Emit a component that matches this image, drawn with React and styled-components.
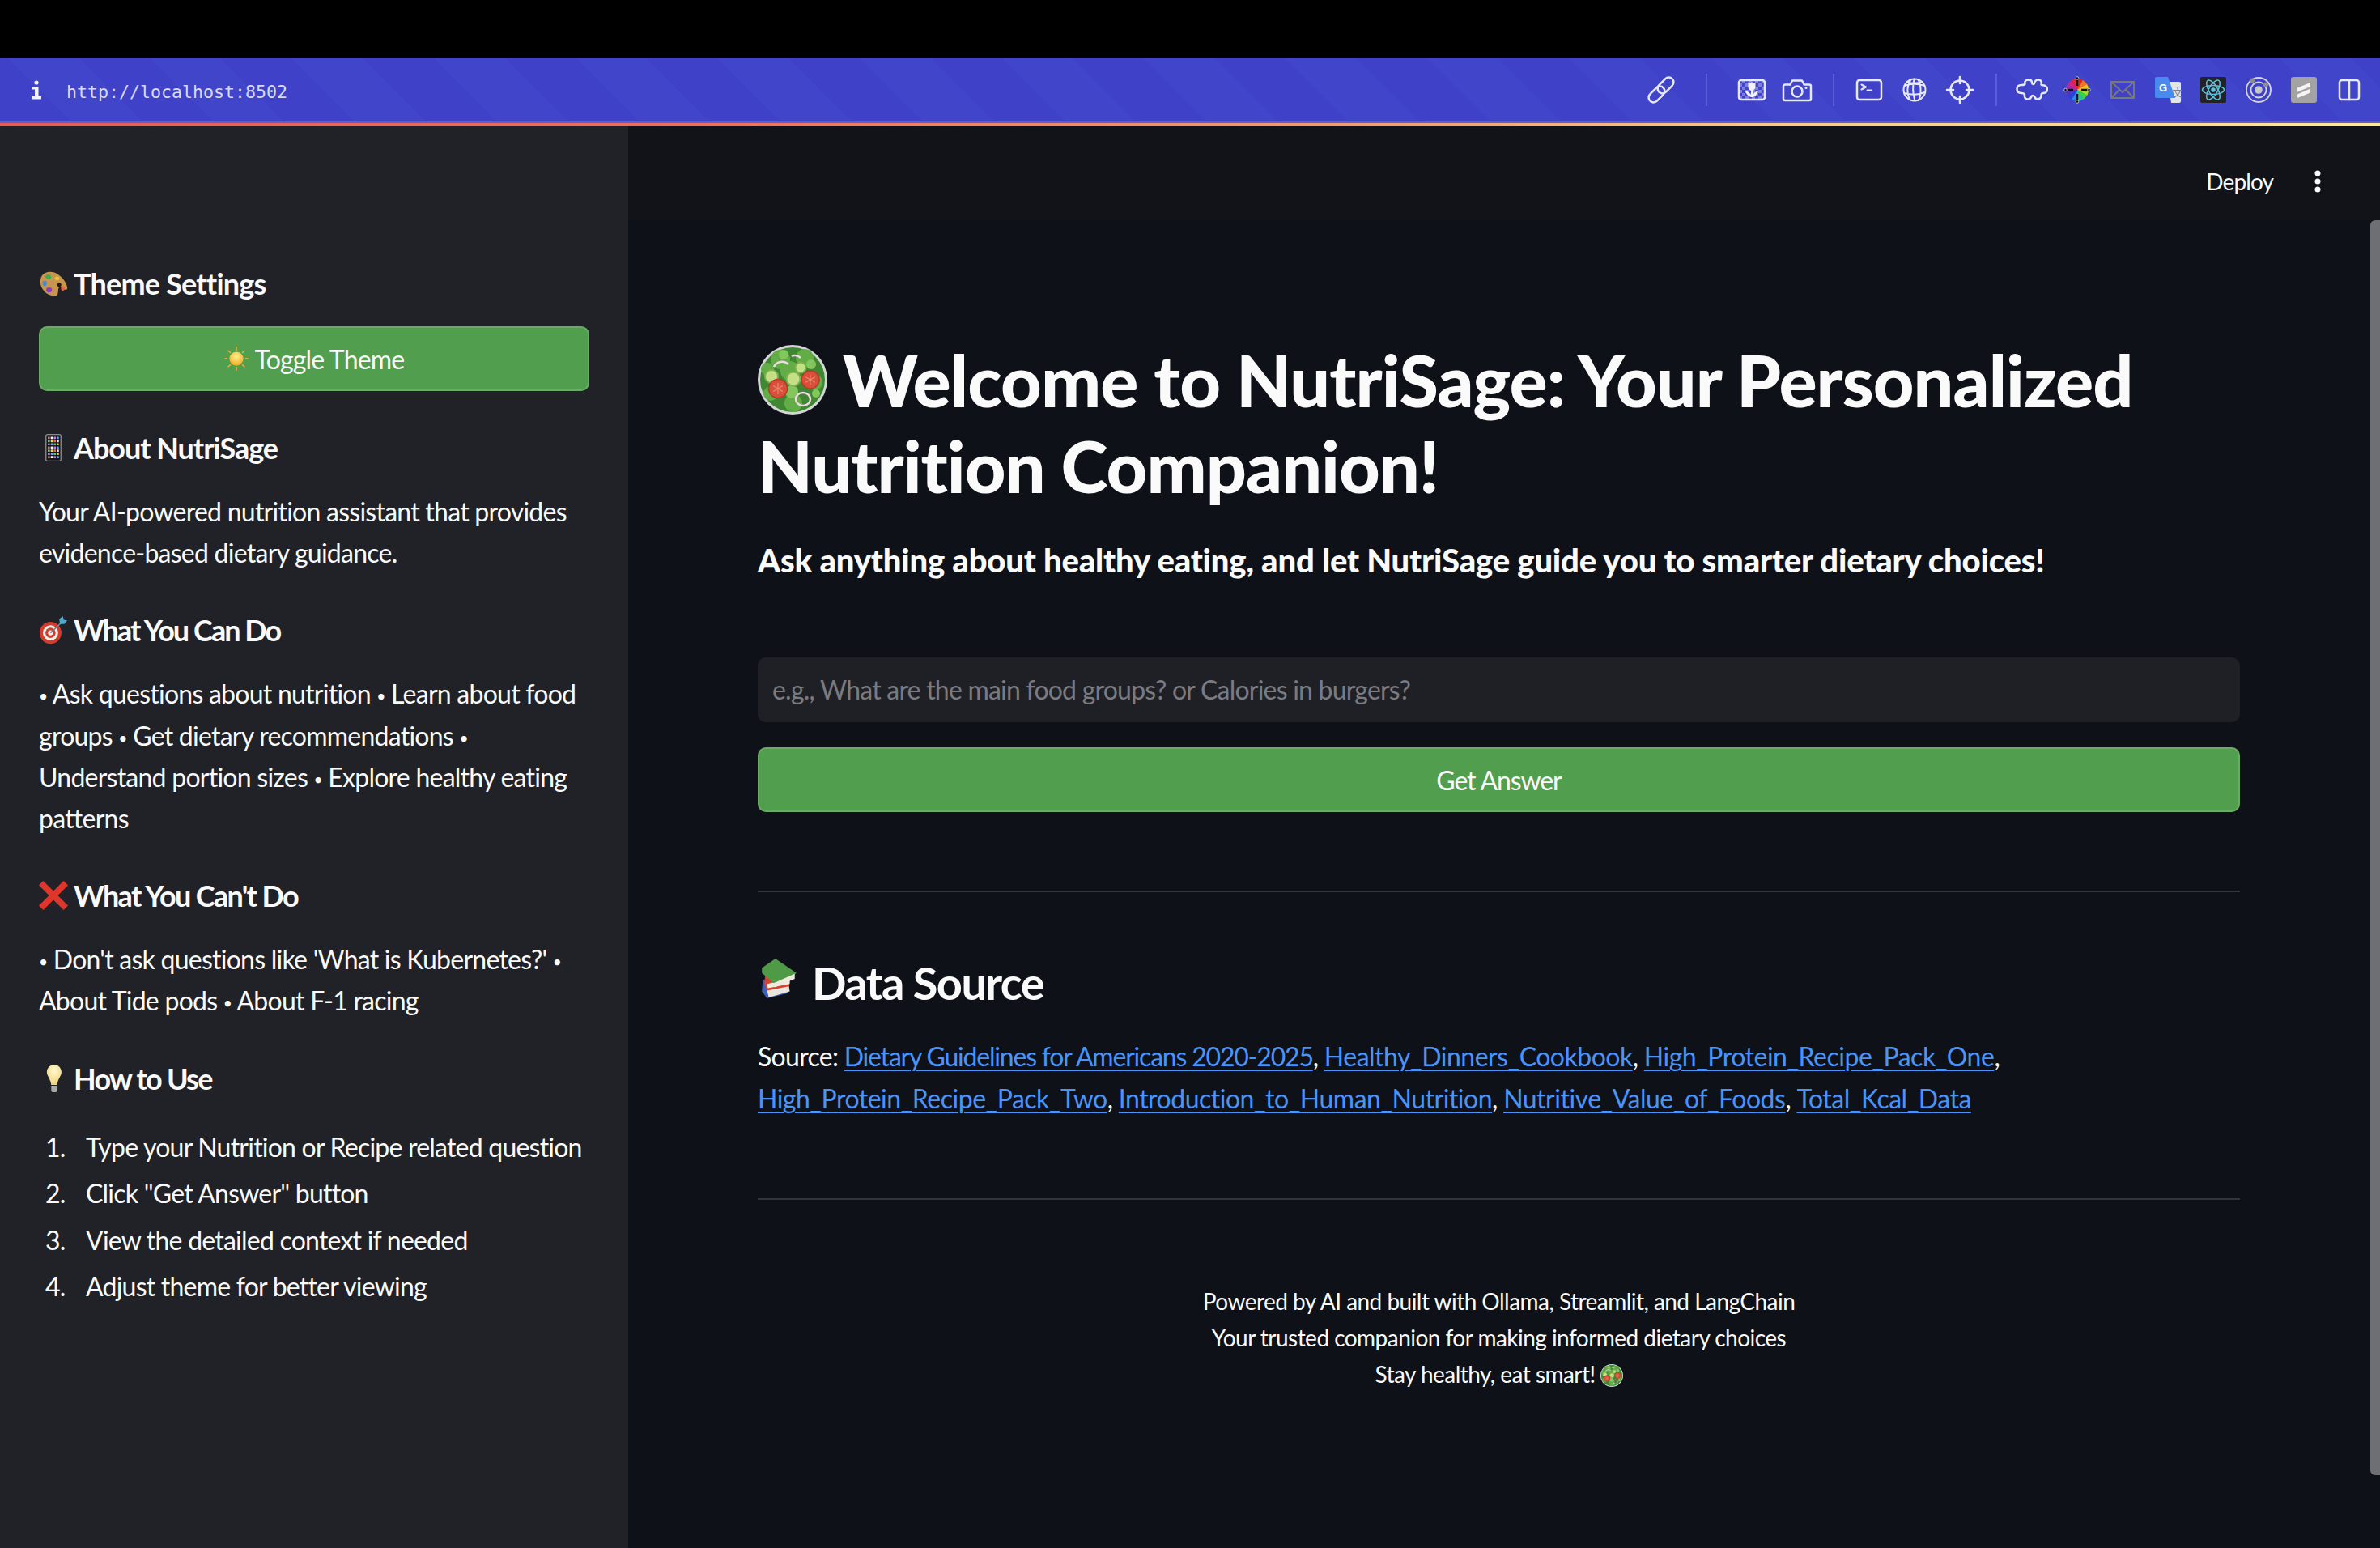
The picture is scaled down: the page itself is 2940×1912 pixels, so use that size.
import React from 'react'
import styled, { createGlobalStyle } from 'styled-components'

const SANS = '"Lato", "Noto Sans", sans-serif'

const GlobalStyle = createGlobalStyle`
  html, body { margin: 0; padding: 0; background: #000; }
  body { font-family: ${SANS}; color: #fafafa; }
`

const Page = styled.div`
  width: 2940px;
  height: 1912px;
  display: flex;
  flex-direction: column;
  overflow: hidden;
  position: relative;
`

const TopBand = styled.div`
  height: 72px;
  flex: none;
  background: #000;
`

const BrowserBar = styled.div`
  height: 78px;
  flex: none;
  display: flex;
  align-items: center;
  justify-content: space-between;
  padding: 0 10px 0 38px;
  background: repeating-linear-gradient(45deg, #3f42c8 0 62px, #4145ca 62px 124px);
  border-bottom: 2px solid #5b5ed4;
`

const RainbowLine = styled.div`
  height: 4px;
  flex: none;
  background: linear-gradient(90deg, #e85a50 0%, #f0705a 30%, #f5a170 60%, #fbc985 75%, #ffe78e 100%);
`

const UrlGroup = styled.div`
  display: flex;
  align-items: center;
  gap: 30px;
`

const Url = styled.span`
  padding-top: 4px;
  font-family: "DejaVu Sans Mono", monospace;
  font-size: 21.6px;
  color: #d8daf6;
`

const ToolGroup = styled.div`
  display: flex;
  align-items: center;
`

const ToolSlot = styled.div`
  width: 56px;
  height: 40px;
  display: flex;
  align-items: center;
  justify-content: center;
  svg { display: block; }
`

const Separator = styled.div`
  width: ${p => p.$width}px;
  height: 40px;
  display: flex;
  justify-content: center;
  &::before {
    content: "";
    width: 2px;
    background: #5a5ed6;
  }
`

const Body = styled.div`
  flex: 1;
  display: flex;
  min-height: 0;
`

const Sidebar = styled.aside`
  width: 776px;
  flex: none;
  box-sizing: border-box;
  padding: 124px 48px 0 48px;
  background: #212228;
`

const SideHeading = styled.h3`
  margin: 45px 0 28px;
  height: 50px;
  display: flex;
  align-items: center;
  gap: 7px;
  font-size: 36px;
  font-weight: 700;
  letter-spacing: ${p => p.$tracking}px;
  color: #fafafa;
`

const EmojiBox = styled.span`
  width: ${p => p.$size || 36}px;
  height: ${p => p.$size || 36}px;
  flex: none;
  display: inline-block;
  svg { display: block; width: 100%; height: 100%; }
`

const GreenButton = styled.button`
  width: 100%;
  height: 80px;
  display: flex;
  align-items: center;
  justify-content: center;
  gap: 8px;
  border: 2px solid #6aab66;
  border-radius: 10px;
  background: #529e4f;
  color: #fafafa;
  font-family: ${SANS};
  font-size: 32px;
  letter-spacing: ${p => p.$tracking}px;
`

const SideText = styled.p`
  margin: 0;
  font-size: 32px;
  line-height: 51.2px;
  letter-spacing: -0.75px;
  color: #fafafa;
  white-space: nowrap;
`

const Bullet = styled.span`
  font-size: 0.6em;
  line-height: 0;
  vertical-align: 0.12em;
`

const Steps = styled.ol`
  margin: 34px 0 0;
  padding: 0;
  list-style: none;
  counter-reset: step;
`

const Step = styled.li`
  counter-increment: step;
  margin-bottom: 6.4px;
  font-size: 32px;
  line-height: 51.2px;
  letter-spacing: -0.78px;
  white-space: nowrap;
  &::before {
    content: counter(step) ".";
    display: inline-block;
    box-sizing: border-box;
    width: 58px;
    padding-left: 8px;
  }
`

const Main = styled.main`
  flex: 1;
  display: flex;
  flex-direction: column;
  background: #0e1118;
  min-width: 0;
`

const MainHeader = styled.header`
  height: 116px;
  flex: none;
  box-sizing: border-box;
  display: flex;
  justify-content: flex-end;
  align-items: flex-start;
  padding: 49px 72px 0 0;
  gap: 50px;
  background: #111318;
`

const Deploy = styled.span`
  font-size: 28px;
  line-height: 38px;
  letter-spacing: -0.9px;
  color: #fafafa;
`

const MenuDots = styled.span`
  width: 10px;
  height: 38px;
  svg { display: block; }
`

const Content = styled.div`
  padding: 145px 173px 0 160px;
`

const Title = styled.h1`
  margin: 0;
  font-size: 88px;
  line-height: 105.6px;
  font-weight: 900;
  letter-spacing: -0.95px;
  color: #fafafa;
  white-space: nowrap;
`

const TitleEmoji = styled(EmojiBox)`
  vertical-align: -9px;
  margin-right: 19px;
`

const Subtitle = styled.h3`
  margin: 38px 0 0;
  font-size: 40px;
  line-height: 52px;
  font-weight: 900;
  letter-spacing: -0.17px;
  color: #fafafa;
  white-space: nowrap;
`

const QuestionInput = styled.input`
  display: block;
  width: 100%;
  height: 80px;
  margin-top: 94px;
  box-sizing: border-box;
  padding: 0 18px 2px;
  border: 0;
  border-radius: 10px;
  outline: 0;
  background: #1f2026;
  color: #fafafa;
  font-family: ${SANS};
  font-size: 32px;
  letter-spacing: -0.78px;
  &::placeholder { color: #7a7b81; opacity: 1; }
`

const AnswerButton = styled(GreenButton)`
  margin-top: 31px;
`

const Rule = styled.hr`
  margin: 97px 0 0;
  border: 0;
  height: 2px;
  background: #33353b;
`

const SectionTitle = styled.h2`
  margin: 75px 0 0;
  display: flex;
  align-items: center;
  gap: 15px;
  height: 72px;
  font-size: 56px;
  font-weight: 700;
  letter-spacing: -1.6px;
  color: #fafafa;
`

const SectionEmoji = styled(EmojiBox)`
  margin-top: -8px;
`

const SourceText = styled.p`
  margin: 30px 0 0;
  font-size: 32px;
  line-height: 52px;
  letter-spacing: -0.7px;
  white-space: nowrap;
`

const SourceLink = styled.a`
  color: #4a94f8;
  letter-spacing: ${p => (p.$plain ? -1.2 : -0.5)}px;
  text-decoration: underline;
  text-decoration-thickness: 2px;
  text-underline-offset: 4px;
`

const Footer = styled.footer`
  margin-top: 103px;
  text-align: center;
  font-size: 28px;
  line-height: 44.8px;
  letter-spacing: -0.53px;
  color: #fafafa;
`

const FooterEmoji = styled(EmojiBox)`
  vertical-align: -5px;
  margin-left: 6px;
`

const Scrollbar = styled.div`
  position: absolute;
  top: 272px;
  right: 0;
  width: 12px;
  height: 1550px;
  background: #6e6f74;
  border-radius: 6px 0 0 6px;
`

const stroke = { fill: 'none', stroke: '#e7e8fb', strokeWidth: 2.5, strokeLinecap: 'round', strokeLinejoin: 'round' }

const Icon = ({ children }) => (
  <svg width="40" height="40" viewBox="0 0 40 40">{children}</svg>
)

const InfoIcon = () => (
  <svg width="14" height="24" viewBox="0 0 14 24" fill="#f2f3ff">
    <circle cx="7" cy="3" r="2.6" />
    <path d="M1.5 8h8v12H13v3.5H1v-3.5h4v-8.5H1.5z" />
  </svg>
)

const LinkIcon = () => (
  <Icon>
    <g {...stroke}>
      <rect x="-11.5" y="-6" width="23" height="12" rx="6" transform="translate(14.5 25.5) rotate(-45)" />
      <rect x="-11.5" y="-6" width="23" height="12" rx="6" transform="translate(25.5 14.5) rotate(-45)" />
    </g>
  </Icon>
)

const MacroIcon = () => (
  <Icon>
    <defs>
      <pattern id="checker" width="8" height="8" patternUnits="userSpaceOnUse">
        <rect width="4" height="4" fill="#aeb0f0" opacity="0.55" />
        <rect x="4" y="4" width="4" height="4" fill="#aeb0f0" opacity="0.55" />
      </pattern>
    </defs>
    <rect x="4" y="8" width="32" height="24" rx="3" {...stroke} style={{ fill: 'url(#checker)' }} />
    <path d="M15.5 10.5l2.3 1.8 2.2-2.3 2.2 2.3 2.3-1.8v6a4.5 4.5 0 0 1-9 0z" fill="#f2f3ff" />
    <path d="M20 20v9" stroke="#f2f3ff" strokeWidth="2" />
    <path d="M12 21.5c4 .5 7 3.5 8 7.5-4-.5-7-3.5-8-7.5zM28 21.5c-4 .5-7 3.5-8 7.5 4-.5 7-3.5 8-7.5z" fill="#f2f3ff" />
  </Icon>
)

const CameraIcon = () => (
  <Icon>
    <g {...stroke}>
      <path d="M5 13.5h6.5l2.5-5h12l2.5 5H35a2 2 0 0 1 2 2V31a2 2 0 0 1-2 2H5a2 2 0 0 1-2-2V15.5a2 2 0 0 1 2-2z" />
      <circle cx="20" cy="22" r="6.5" />
    </g>
    <circle cx="31" cy="17.5" r="1.5" fill="#e7e8fb" />
  </Icon>
)

const TerminalIcon = () => (
  <Icon>
    <g {...stroke}>
      <rect x="5" y="8" width="30" height="24" rx="3" />
      <path d="M10.5 13.5l5.5 3-5.5 3M17.5 20.5h5" strokeWidth="2" />
    </g>
  </Icon>
)

const GlobeIcon = () => (
  <Icon>
    <g {...stroke} strokeWidth="2">
      <circle cx="20" cy="20" r="13.5" />
      <path d="M15 8c-4 7-5 16-1 24M24 7c4 5 5 18 1 26M19.5 6.5c-2 9-2 18 1 27M7.5 15c8-3 17-3 25 0M7 24c8 2 17 3 25.5-1M10 10c7 3 14 2 20 0" />
    </g>
  </Icon>
)

const CrosshairIcon = () => (
  <Icon>
    <g {...stroke}>
      <circle cx="20" cy="20" r="11.5" />
      <path d="M20 4v8M20 28v8M4 20h8M28 20h8" />
    </g>
  </Icon>
)

const PuzzleIcon = () => (
  <Icon>
    <path
      {...stroke}
      d="M7 14C9 14 11 14 11.5 12.5C10.5 9 13 7.5 16 7.5C19 7.5 20 9.5 20 11C20 13 22 13.5 23 12C23.5 9.5 25.5 7.5 28 7.5C31 7.5 32.5 10 31.5 13.5C32.5 14.5 34 14 35 14.5C38 15.5 39 17.5 39 19.5C39 22 37 24 34 24C33 24 31.8 24.5 31.5 26C32 29 30 31.5 27 31.5C24.5 31.5 23.5 29.5 23 28C22 26.5 20 26.5 19.5 28C19 30 17 31.5 14.5 31.5C12 31.5 10.5 29.5 11 26C10.5 24.5 9 24 7 24C3.5 24 1.5 22 1.5 19C1.5 16 3.5 14 7 14Z"
    />
  </Icon>
)

const WHEEL = ['#e2241c', '#f2741c', '#f5c51d', '#a5d92a', '#3fce4a', '#26c9a0', '#1f8fe8', '#2443d8', '#5d2fc8', '#a92bb8', '#d6247c', '#e2243c']

const ColorWheelIcon = () => (
  <Icon>
    {WHEEL.map((color, i) => {
      const a = (i * Math.PI) / 6 - Math.PI / 2
      const b = a + Math.PI / 6
      const d = `M20 20L${20 + 14 * Math.cos(a)} ${20 + 14 * Math.sin(a)}A14 14 0 0 1 ${20 + 14 * Math.cos(b)} ${20 + 14 * Math.sin(b)}Z`
      return <path key={color} d={d} fill={color} />
    })}
    <path d="M20 6v9M20 25v9M6 20h9M25 20h9" stroke="#111" strokeWidth="2.5" />
    <g fill="#111" stroke="#ddd" strokeWidth="0.8">
      <circle cx="20" cy="5.5" r="1.8" />
      <circle cx="20" cy="34.5" r="1.8" />
      <circle cx="5.5" cy="20" r="1.8" />
      <circle cx="34.5" cy="20" r="1.8" />
    </g>
  </Icon>
)

const MailIcon = () => (
  <Icon>
    <g fill="none" stroke="#77777e" strokeWidth="2">
      <rect x="6" y="10" width="28" height="20" />
      <path d="M6 10l14 13 14-13M6 30l10-10M34 30L24 20" />
    </g>
  </Icon>
)

const TranslateIcon = () => (
  <Icon>
    <path d="M20 10h14a2 2 0 0 1 2 2v22a2 2 0 0 1-2 2H24z" fill="#e4e5ea" />
    <text x="25.5" y="28" fontSize="13" fill="#7d8188" fontFamily='"Noto Sans CJK SC", sans-serif'>文</text>
    <path d="M6 4h14l9 26H6a2 2 0 0 1-2-2V6a2 2 0 0 1 2-2z" fill="#4a8af0" />
    <text x="9" y="22" fontSize="13" fontWeight="700" fill="#fff" fontFamily='"Liberation Sans", sans-serif'>G</text>
  </Icon>
)

const ReactLogo = () => (
  <Icon>
    <rect x="4" y="4" width="32" height="32" rx="2" fill="#222327" />
    <g fill="none" stroke="#5fc0de" strokeWidth="1.5">
      <ellipse cx="20" cy="20" rx="13.5" ry="5.5" />
      <ellipse cx="20" cy="20" rx="13.5" ry="5.5" transform="rotate(60 20 20)" />
      <ellipse cx="20" cy="20" rx="13.5" ry="5.5" transform="rotate(120 20 20)" />
    </g>
    <circle cx="20" cy="20" r="2.8" fill="#5fc0de" />
  </Icon>
)

const OrbitIcon = () => (
  <Icon>
    <g fill="none" stroke="#d6d6de" strokeWidth="1.8">
      <circle cx="20" cy="20" r="15" />
      <circle cx="20" cy="20" r="9.5" />
    </g>
    <circle cx="20" cy="20" r="4.8" fill="#c6c6cd" />
    <circle cx="12" cy="8.5" r="3" fill="#8d8d93" />
    <circle cx="29" cy="13.5" r="3" fill="#8d8d93" />
  </Icon>
)

const SlashLogo = () => (
  <Icon>
    <rect x="4" y="4" width="32" height="32" rx="3" fill="#a3a3a3" />
    <path d="M12 17.5L28 11v5l-16 6.5zM12 25.5l16-7v5L12 30z" fill="#f4f4f4" />
  </Icon>
)

const ColumnsIcon = () => (
  <Icon>
    <g {...stroke}>
      <rect x="8" y="8" width="24" height="24" rx="3" />
      <path d="M20 8v24" />
    </g>
  </Icon>
)

const PaletteEmoji = () => (
  <svg viewBox="0 0 40 40">
    <path d="M3 12C6 4 17 2 25 7c7 4 12 11 14 18 1 4-3 5-6 2-2-2-5-3-6 0-1 3 0 7-2 9-3 2-10 1-14-2C4 29 0 20 3 12z" fill="#c8964f" />
    <circle cx="28" cy="22" r="2.8" fill="#201c18" />
    <ellipse cx="13" cy="11" rx="4" ry="3" fill="#38b24a" transform="rotate(20 13 11)" />
    <ellipse cx="25" cy="13" rx="3" ry="2.5" fill="#e8c53c" />
    <ellipse cx="8" cy="20" rx="3" ry="3.5" fill="#3f8ce0" />
    <ellipse cx="14" cy="29" rx="4" ry="3.5" fill="#8a3ec8" />
    <ellipse cx="33" cy="27" rx="2.5" ry="3" fill="#e0644c" />
  </svg>
)

const SunEmoji = () => (
  <svg viewBox="0 0 40 40">
    <defs>
      <radialGradient id="sunFill" cx="50%" cy="35%" r="70%">
        <stop offset="0%" stopColor="#fff08a" />
        <stop offset="100%" stopColor="#f0a61f" />
      </radialGradient>
    </defs>
    <circle cx="20" cy="20" r="11.5" fill="url(#sunFill)" />
    <g stroke="#efb02c" strokeWidth="2" strokeLinecap="round">
      <path d="M20 1v5M20 34v5M1 20h4M35 20h4M7 7l3 3M30 30l3 3M33 7l-3 3M10 30l-3 3" />
    </g>
  </svg>
)

const PHONE_COLORS = ['#f06a58', '#f8d050', '#5ad06a', '#5aa8f8', '#c878e8', '#f4f4f4']

const PhoneEmoji = () => (
  <svg viewBox="0 0 40 40">
    <rect x="9" y="1" width="22" height="38" rx="3" fill="#8a8c90" />
    <rect x="10.5" y="2.5" width="19" height="35" rx="1.5" fill="#16171a" />
    {Array.from({ length: 28 }).map((_, i) => (
      <rect
        key={i}
        x={12.2 + (i % 4) * 4.1}
        y={5 + Math.floor(i / 4) * 4.4}
        width="3"
        height="3"
        rx="0.6"
        fill={PHONE_COLORS[(i * 5) % 6]}
      />
    ))}
  </svg>
)

const DartEmoji = () => (
  <svg viewBox="0 0 40 40">
    <circle cx="16" cy="24" r="15" fill="#d33b2f" />
    <circle cx="16" cy="24" r="10.5" fill="#f2f0ea" />
    <circle cx="16" cy="24" r="7" fill="#d33b2f" />
    <circle cx="16" cy="24" r="3.5" fill="#f2f0ea" />
    <path d="M16 24L32 9" stroke="#7a8288" strokeWidth="2" />
    <path d="M29 12l-1-7 5-4 1 5 5 1-4 5z" fill="#4ea8c8" />
  </svg>
)

const CrossEmoji = () => (
  <svg viewBox="0 0 40 40">
    <path d="M6 0l14 14L34 0l6 6-14 14 14 14-6 6-14-14L6 40l-6-6 14-14L0 6z" fill="#e0352b" />
  </svg>
)

const BulbEmoji = () => (
  <svg viewBox="0 0 40 40">
    <defs>
      <radialGradient id="bulbFill" cx="50%" cy="30%" r="65%">
        <stop offset="0%" stopColor="#fff9d2" />
        <stop offset="100%" stopColor="#f0d67c" />
      </radialGradient>
    </defs>
    <path d="M21 1c6 0 10 5 10 10 0 6-5 9-6 18h-8c-1-9-6-12-6-18C11 6 15 1 21 1z" fill="url(#bulbFill)" />
    <path d="M17 30h8v6a3 3 0 0 1-3 3h-2a3 3 0 0 1-3-3z" fill="#a8a8a4" />
  </svg>
)

const TOMATO_RAYS = [0, 60, 120, 180, 240, 300]

const Tomato = ({ cx, cy, r }) => (
  <g>
    <circle cx={cx} cy={cy} r={r} fill="#d94f3a" stroke="#b83a2a" strokeWidth="1.5" />
    {TOMATO_RAYS.map(deg => (
      <path
        key={deg}
        d={`M${cx} ${cy}l0 ${-r * 0.6}`}
        stroke="#ea8a72"
        strokeWidth="1.2"
        transform={`rotate(${deg} ${cx} ${cy})`}
      />
    ))}
  </g>
)

const SaladEmoji = () => (
  <svg viewBox="0 0 86 86">
    <circle cx="43" cy="43" r="43" fill="#d3d6d4" />
    <circle cx="43" cy="43" r="40" fill="#3f8732" />
    <g fill="#62ad46">
      <circle cx="28" cy="18" r="12" />
      <circle cx="58" cy="16" r="11" />
      <circle cx="70" cy="46" r="10" />
      <circle cx="44" cy="72" r="11" />
      <circle cx="16" cy="60" r="9" />
      <circle cx="40" cy="32" r="12" />
      <circle cx="12" cy="30" r="8" />
    </g>
    <g fill="#83c65e">
      <circle cx="32" cy="12" r="6" />
      <circle cx="66" cy="24" r="6" />
      <circle cx="42" cy="58" r="8" />
      <circle cx="72" cy="60" r="5" />
    </g>
    <g fill="#c3e086" stroke="#7fb04e" strokeWidth="2">
      <circle cx="17" cy="39" r="8" />
      <circle cx="44" cy="42" r="8.5" />
      <circle cx="53" cy="28" r="6.5" />
    </g>
    <Tomato cx={25} cy={54} r={11.5} />
    <Tomato cx={65} cy={43} r={11} />
    <g fill="none" stroke="#efd7e4" strokeWidth="2.5">
      <ellipse cx="56" cy="67" rx="9" ry="8" />
      <path d="M20 27c3-7 13-8 18-3" />
      <path d="M42 14c3-2 8-1 11 2" />
    </g>
  </svg>
)

const BooksEmoji = () => (
  <svg viewBox="0 0 44 50">
    <path d="M3 26l30 8v8L8 48 2 40z" fill="#3e5fb5" />
    <path d="M8 38l26-5 1 7-25 7z" fill="#e9e6dc" />
    <path d="M6 18l30 6-2 10-26 5-3-9z" fill="#d8402f" />
    <path d="M8 31l27-6 0 6-26 5z" fill="#efece2" />
    <path d="M2 12L18 1l25 17-5 4-22 8L2 18z" fill="#4f9a46" />
    <path d="M16 30l25-11 0 6-24 10z" fill="#eeeade" />
  </svg>
)

const App = () => (
  <Page>
    <GlobalStyle />
    <TopBand />
    <BrowserBar>
      <UrlGroup>
        <InfoIcon />
        <Url>http://localhost:8502</Url>
      </UrlGroup>
      <ToolGroup>
        <ToolSlot><LinkIcon /></ToolSlot>
        <Separator $width={56} />
        <ToolSlot><MacroIcon /></ToolSlot>
        <ToolSlot><CameraIcon /></ToolSlot>
        <Separator $width={33} />
        <ToolSlot><TerminalIcon /></ToolSlot>
        <ToolSlot><GlobeIcon /></ToolSlot>
        <ToolSlot><CrosshairIcon /></ToolSlot>
        <Separator $width={33} />
        <ToolSlot><PuzzleIcon /></ToolSlot>
        <ToolSlot><ColorWheelIcon /></ToolSlot>
        <ToolSlot><MailIcon /></ToolSlot>
        <ToolSlot><TranslateIcon /></ToolSlot>
        <ToolSlot><ReactLogo /></ToolSlot>
        <ToolSlot><OrbitIcon /></ToolSlot>
        <ToolSlot><SlashLogo /></ToolSlot>
        <ToolSlot><ColumnsIcon /></ToolSlot>
      </ToolGroup>
    </BrowserBar>
    <RainbowLine />
    <Body>
      <Sidebar>
        <SideHeading $tracking={-0.8}><EmojiBox><PaletteEmoji /></EmojiBox>Theme Settings</SideHeading>
        <GreenButton $tracking={-0.8}><EmojiBox $size={30}><SunEmoji /></EmojiBox>Toggle Theme</GreenButton>
        <SideHeading $tracking={-1.05}><EmojiBox><PhoneEmoji /></EmojiBox>About NutriSage</SideHeading>
        <SideText>Your AI-powered nutrition assistant that provides<br />evidence-based dietary guidance.</SideText>
        <SideHeading $tracking={-1.95}><EmojiBox><DartEmoji /></EmojiBox>What You Can Do</SideHeading>
        <SideText>
          <Bullet>•</Bullet> Ask questions about nutrition <Bullet>•</Bullet> Learn about food<br />
          groups <Bullet>•</Bullet> Get dietary recommendations <Bullet>•</Bullet><br />
          Understand portion sizes <Bullet>•</Bullet> Explore healthy eating<br />
          patterns
        </SideText>
        <SideHeading $tracking={-1.65}><EmojiBox><CrossEmoji /></EmojiBox>What You Can't Do</SideHeading>
        <SideText>
          <Bullet>•</Bullet> Don't ask questions like 'What is Kubernetes?' <Bullet>•</Bullet><br />
          About Tide pods <Bullet>•</Bullet> About F-1 racing
        </SideText>
        <SideHeading $tracking={-1.75}><EmojiBox><BulbEmoji /></EmojiBox>How to Use</SideHeading>
        <Steps>
          <Step>Type your Nutrition or Recipe related question</Step>
          <Step>Click "Get Answer" button</Step>
          <Step>View the detailed context if needed</Step>
          <Step>Adjust theme for better viewing</Step>
        </Steps>
      </Sidebar>
      <Main>
        <MainHeader>
          <Deploy>Deploy</Deploy>
          <MenuDots>
            <svg width="10" height="38" viewBox="0 0 10 38" fill="#fafafa">
              <circle cx="5" cy="9" r="3.5" />
              <circle cx="5" cy="19" r="3.5" />
              <circle cx="5" cy="29" r="3.5" />
            </svg>
          </MenuDots>
        </MainHeader>
        <Content>
          <Title>
            <TitleEmoji $size={86}><SaladEmoji /></TitleEmoji>
            Welcome to NutriSage: Your Personalized<br />Nutrition Companion!
          </Title>
          <Subtitle>Ask anything about healthy eating, and let NutriSage guide you to smarter dietary choices!</Subtitle>
          <QuestionInput placeholder="e.g., What are the main food groups? or Calories in burgers?" />
          <AnswerButton $tracking={-1.1}>Get Answer</AnswerButton>
          <Rule />
          <SectionTitle><SectionEmoji $size={52}><BooksEmoji /></SectionEmoji>Data Source</SectionTitle>
          <SourceText>
            Source: <SourceLink $plain href="#">Dietary Guidelines for Americans 2020-2025</SourceLink>,{' '}
            <SourceLink href="#">Healthy_Dinners_Cookbook</SourceLink>,{' '}
            <SourceLink href="#">High_Protein_Recipe_Pack_One</SourceLink>,<br />
            <SourceLink href="#">High_Protein_Recipe_Pack_Two</SourceLink>,{' '}
            <SourceLink href="#">Introduction_to_Human_Nutrition</SourceLink>,{' '}
            <SourceLink href="#">Nutritive_Value_of_Foods</SourceLink>,{' '}
            <SourceLink href="#">Total_Kcal_Data</SourceLink>
          </SourceText>
          <Rule />
          <Footer>
            Powered by AI and built with Ollama, Streamlit, and LangChain<br />
            Your trusted companion for making informed dietary choices<br />
            Stay healthy, eat smart!<FooterEmoji $size={28}><SaladEmoji /></FooterEmoji>
          </Footer>
        </Content>
      </Main>
    </Body>
    <Scrollbar />
  </Page>
)

export default App
